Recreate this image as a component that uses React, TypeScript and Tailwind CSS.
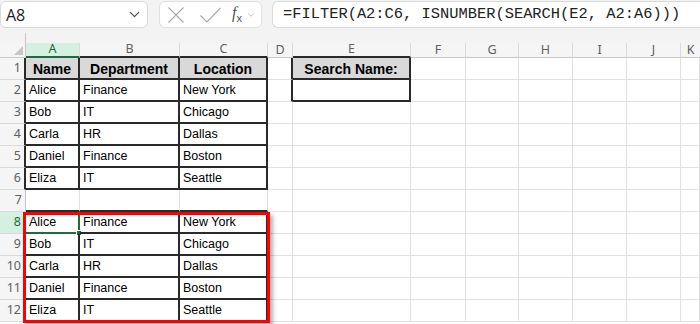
import { ChevronDown } from 'lucide-react';

// ─── DATA ───

const COLS = ['A', 'B', 'C', 'D', 'E', 'F', 'G', 'H', 'I', 'J', 'K'];

const people = [
  ['Alice', 'Finance', 'New York'],
  ['Bob', 'IT', 'Chicago'],
  ['Carla', 'HR', 'Dallas'],
  ['Daniel', 'Finance', 'Boston'],
  ['Eliza', 'IT', 'Seattle'],
];

const header = ['Name', 'Department', 'Location'];

function cellValue(r: number, c: number): string {
  if (r === 1 && c < 3) return header[c];
  if (r >= 2 && r <= 6 && c < 3) return people[r - 2][c];
  if (r >= 8 && r <= 12 && c < 3) return people[r - 8][c];
  if (r === 1 && c === 4) return 'Search Name:';
  return '';
}

function inTable(r: number, c: number) {
  if (c < 0 || c > 10) return false;
  if (c <= 2 && r >= 1 && r <= 6) return true;
  if (c <= 2 && r >= 8 && r <= 12) return true;
  if (c === 4 && (r === 1 || r === 2)) return true;
  return false;
}

const isHeader = (r: number, c: number) => r === 1 && (c <= 2 || c === 4);

// ─── TOOLBAR ───

function FormulaBar() {
  return (
    <div className="h-[43px] bg-[#f3f3f3] flex flex-col">
      <div className="flex items-start h-[33px] pt-[1px]">
        <div className="w-[148px] h-[27px] bg-white border border-[#d9d9d9] rounded-[6px] flex items-center justify-between pl-[5px] pr-[4px]">
          <span className="text-[16px] text-[#1f1f1f]" style={{ fontFamily: '"Open Sans", "Noto Sans", sans-serif' }}>A8</span>
          <ChevronDown size={17} strokeWidth={1.5} className="text-[#444]" />
        </div>
        <div className="ml-[11px] w-[103px] h-[27px] bg-white border border-[#e1e1e1] rounded-[6px] flex items-center pl-[8px]">
          {/* cancel */}
          <svg width="16" height="16" viewBox="0 0 16 16" className="text-[#a8a8a8]">
            <path d="M0.5 0.5 L15.5 15.5 M15.5 0.5 L0.5 15.5" stroke="currentColor" strokeWidth="1.1" fill="none" />
          </svg>
          {/* enter */}
          <svg width="21" height="16" viewBox="0 0 21 16" className="text-[#a8a8a8] ml-[16px]">
            <path d="M0.5 8.5 L7 15 L20.5 1" stroke="currentColor" strokeWidth="1.1" fill="none" />
          </svg>
          <span className="ml-[11px] text-[16px] italic text-[#555] leading-none" style={{ fontFamily: '"Liberation Serif", serif' }}>
            f<span className="text-[11px] not-italic align-sub" style={{ fontFamily: '"Liberation Sans", sans-serif' }}>x</span>
          </span>
          <ChevronDown size={10} strokeWidth={1.4} className="text-[#999] ml-[4px]" />
        </div>
        <div className="ml-[10px] flex-1 h-[27px] bg-white border border-r-0 border-[#d9d9d9] rounded-l-[6px] flex items-center pl-[10px] overflow-hidden whitespace-nowrap">
          <span className="text-[15.4px] text-[#222]" style={{ fontFamily: '"Liberation Mono", "DejaVu Sans Mono", monospace' }}>
            =FILTER(A2:C6, ISNUMBER(SEARCH(E2, A2:A6)))
          </span>
        </div>
      </div>
      <div className="flex-1 flex">
        <div className="w-[26px] border-r border-[#c8c8c8]" />
      </div>
    </div>
  );
}

// ─── SHEET ───

function Cell({ r, c }: { r: number; c: number }) {
  const value = cellValue(r, c);
  const darkR = inTable(r, c) || inTable(r, c + 1);
  const darkB = inTable(r, c) || inTable(r + 1, c);
  const head = isHeader(r, c);
  const selected = r === 8 && c === 0;

  return (
    <div
      className={[
        'relative flex items-center overflow-visible whitespace-nowrap',
        darkR ? 'border-r-2 border-r-[#2a2a2a]' : 'border-r border-r-[#e1e1e1]',
        darkB ? 'border-b-2 border-b-[#2a2a2a]' : 'border-b border-b-[#e1e1e1]',
        head ? 'bg-[#d9d9d9] justify-center font-bold text-[14px] pt-[2px]' : 'pl-[3px] text-[12.5px]',
      ].join(' ')}
      style={{ fontFamily: '"Liberation Sans", Arial, sans-serif' }}
    >
      <span className="text-black">{value}</span>
      {selected && (
        <>
          <div className="absolute left-0 top-0 -right-[2px] -bottom-[2px] border-b-2 border-r-2 border-[#1e6b41]" />
          <div className="absolute -right-[4px] -bottom-[4px] w-[6px] h-[6px] bg-[#1e6b41] border border-white" />
        </>
      )}
    </div>
  );
}

function Sheet() {
  const rows = Array.from({ length: 12 }, (_, i) => i + 1);

  return (
    <div className="relative">
      <div className="grid grid-cols-[26px_54px_100px_88px_25px_118px_55px_53px_54px_54px_54px_1fr] grid-rows-[15px_repeat(12,22px)]">
        {/* corner */}
        <div className="relative bg-[#f5f5f5] border-r border-b border-[#c8c8c8]">
          <div className="absolute right-[2px] bottom-[2px] w-0 h-0 border-l-[9px] border-l-transparent border-b-[9px] border-b-[#c6c6c6]" />
        </div>

        {/* column headings */}
        {COLS.map((col, c) => {
          const active = c === 0;
          const darkB = inTable(1, c);
          return (
            <div
              key={col}
              className={[
                'flex items-center justify-center text-[12.5px]',
                active ? 'bg-[#d3f0e0] text-[#1e6b41]' : 'bg-[#f5f5f5] text-[#616161]',
                c === 10 ? '' : 'border-r border-r-[#dadada]',
                active ? 'border-b-2 border-b-[#1e6b41]' : darkB ? 'border-b-2 border-b-[#2a2a2a]' : 'border-b border-b-[#c8c8c8]',
              ].join(' ')}
              style={{ fontFamily: '"Noto Sans", "Liberation Sans", sans-serif' }}
            >
              {col}
            </div>
          );
        })}

        {rows.map((r) => (
          <div key={r} className="contents">
            <div
              className={[
                'flex items-center justify-end pr-[3px] text-[12.5px] border-b border-b-[#dadada]',
                r === 8 ? 'bg-[#d3f0e0] text-[#1e6b41] border-r-2 border-r-[#1e6b41]' : 'bg-[#f5f5f5] text-[#616161]',
                r !== 8 && inTable(r, 0) ? 'border-r-2 border-r-[#2a2a2a]' : '',
                r !== 8 && !inTable(r, 0) ? 'border-r border-r-[#c8c8c8]' : '',
              ].join(' ')}
              style={{ fontFamily: '"Noto Sans", "Liberation Sans", sans-serif' }}
            >
              {r}
            </div>
            {COLS.map((col, c) => (
              <Cell key={col} r={r} c={c} />
            ))}
          </div>
        ))}
      </div>

      {/* red annotation around the spilled result */}
      <div className="absolute left-[23px] top-[169px] w-[247px] h-[111px] border-[3px] border-[#ff0000] shadow-[3px_3px_4px_rgba(0,0,0,0.3)] pointer-events-none" />
    </div>
  );
}

export default function App() {
  return (
    <div className="w-[700px] h-[324px] overflow-hidden bg-white">
      <FormulaBar />
      <Sheet />
    </div>
  );
}
